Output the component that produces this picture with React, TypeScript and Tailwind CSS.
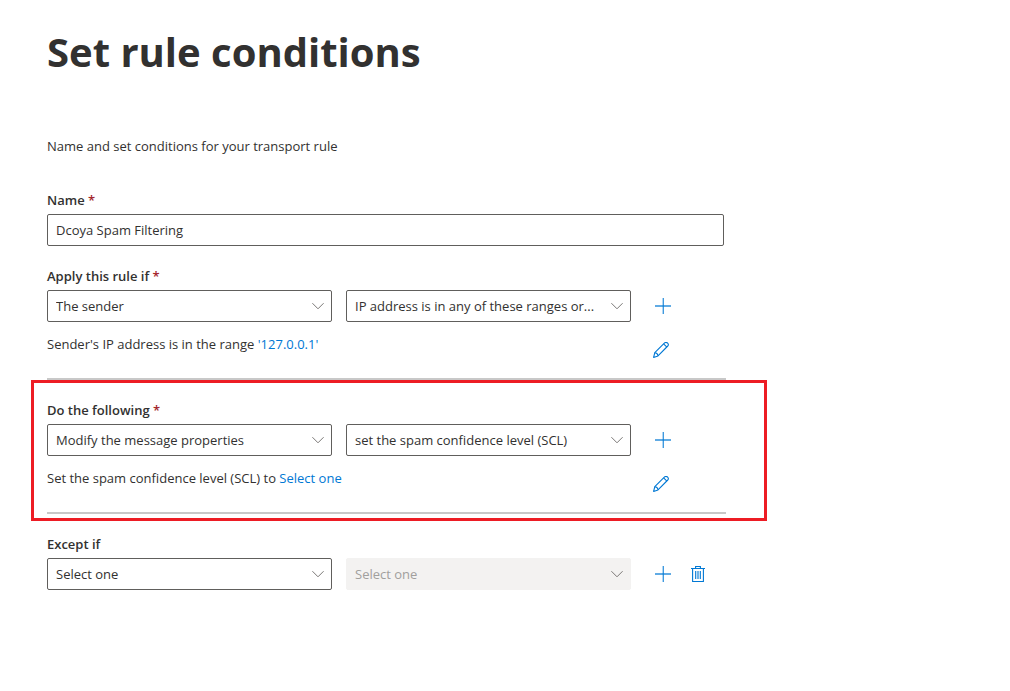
import { useState, type ReactNode } from "react";

function ChevronIcon() {
  return (
    <svg
      className="pointer-events-none absolute right-2 top-1/2 h-3 w-3 -translate-y-1/2"
      viewBox="0 0 12 12"
      fill="none"
      stroke="#7a7876"
      aria-hidden="true"
    >
      <path d="M0.4 3.2L6 8.8l5.6-5.6" />
    </svg>
  );
}

function PlusIcon() {
  return (
    <svg className="h-4 w-4" viewBox="0 0 16 16" fill="#0078d4" aria-hidden="true">
      <path d="M0 7h16v2H0z" fillOpacity="0.62" />
      <path d="M7.6 0h1.4v16H7.6z" fillOpacity="0.75" />
    </svg>
  );
}

function PencilIcon() {
  return (
    <svg
      className="h-4 w-4"
      viewBox="0 0 16 16"
      fill="none"
      stroke="#0078d4"
      strokeWidth="1.1"
      strokeLinejoin="round"
      aria-hidden="true"
    >
      <path d="M0.6 15.4l1.2-4.8L11.6 0.9c.9-.7 2.2-.6 3 .2.8.8.9 2.1.2 2.9L5 13.9z" />
      <path d="M10.6 1.9l3.3 3.2M1.8 10.8c1.9.1 3 1.2 3.1 3" />
    </svg>
  );
}

function TrashIcon() {
  return (
    <svg
      className="h-4 w-4"
      viewBox="0 0 16 16"
      fill="none"
      stroke="#0078d4"
      strokeWidth="1.1"
      aria-hidden="true"
    >
      <path d="M1 2.5h14M5.6 2.5v-2h4.8v2M2.6 2.5v13h10.8v-13" />
      <path d="M5.7 5v8M8 5v8M10.3 5v8" />
    </svg>
  );
}

function IconButton({ label, children }: { label: string; children: ReactNode }) {
  return (
    <button
      type="button"
      aria-label={label}
      className="flex h-8 w-8 cursor-pointer items-center justify-center"
    >
      {children}
    </button>
  );
}

type DropdownProps = {
  id?: string;
  label?: string;
  options: string[];
  disabled?: boolean;
};

function Dropdown({ id, label, options, disabled }: DropdownProps) {
  return (
    <div className="relative min-w-0 flex-1">
      <select
        id={id}
        aria-label={label}
        disabled={disabled}
        className="h-8 w-full appearance-none truncate rounded-xs border border-[#605e5c] bg-white pl-2 pr-7 disabled:border-[#f3f2f1] disabled:bg-[#f3f2f1] disabled:text-[#a19f9d] disabled:opacity-100"
      >
        {options.map((option) => (
          <option key={option}>{option}</option>
        ))}
      </select>
      <ChevronIcon />
    </div>
  );
}

type RuleProps = {
  id: string;
  title: string;
  required?: boolean;
  first: string[];
  second: string[];
  secondDisabled?: boolean;
  removable?: boolean;
  highlighted?: boolean;
  summary?: ReactNode;
};

function RuleSection({
  id,
  title,
  required,
  first,
  second,
  secondDisabled,
  removable,
  highlighted,
  summary,
}: RuleProps) {
  return (
    <section className="relative mt-5">
      <label htmlFor={id} className="block font-semibold">
        {title} {required && <span className="text-[#a4262c]">*</span>}
      </label>
      <div className="mt-1 flex">
        <div className="flex min-w-0 flex-1 gap-3.5">
          <Dropdown id={id} options={first} />
          <Dropdown label={title + " property"} options={second} disabled={secondDisabled} />
        </div>
        <div className="flex w-[95px] gap-[3px] pl-4">
          <IconButton label="Add">
            <PlusIcon />
          </IconButton>
          {removable && (
            <IconButton label="Delete">
              <TrashIcon />
            </IconButton>
          )}
        </div>
      </div>
      {summary && (
        <div className="flex h-14 justify-between pt-3">
          <p>{summary}</p>
          <div className="w-[81px]">
            <IconButton label="Edit">
              <PencilIcon />
            </IconButton>
          </div>
        </div>
      )}
      {summary && <hr className="border-t-2 border-[#c8c8c8]" />}
      {highlighted && (
        <div className="pointer-events-none absolute -bottom-[7px] -left-4 -right-[41px] -top-5 border-3 border-[#ed1c24]" />
      )}
    </section>
  );
}

export default function App() {
  const [name, setName] = useState("Dcoya Spam Filtering");

  return (
    <main className="min-h-screen bg-white px-[47px] py-6 font-['Open_Sans','Noto_Sans',sans-serif] text-[13px] leading-5 text-[#323130]">
      <h1 className="text-[40px] font-bold leading-14">Set rule conditions</h1>
      <p className="mt-14">Name and set conditions for your transport rule</p>

      <form className="mt-[34px] max-w-[679px]">
        <label htmlFor="rule-name" className="block font-semibold">
          Name <span className="text-[#a4262c]">*</span>
        </label>
        <div className="mt-1 pr-0.5">
          <input
            id="rule-name"
            type="text"
            value={name}
            onChange={(e) => setName(e.target.value)}
            className="block h-8 w-full rounded-xs border border-[#605e5c] px-2"
          />
        </div>

        <RuleSection
          id="apply-if"
          title="Apply this rule if"
          required
          first={["The sender"]}
          second={["IP address is in any of these ranges or..."]}
          summary={
            <>
              Sender's IP address is in the range{" "}
              <a href="#range" className="text-[#0078d4]">
                '127.0.0.1'
              </a>
            </>
          }
        />
        <RuleSection
          id="do-following"
          title="Do the following"
          required
          highlighted
          first={["Modify the message properties"]}
          second={["set the spam confidence level (SCL)"]}
          summary={
            <>
              Set the spam confidence level (SCL) to{" "}
              <a href="#scl" className="text-[#0078d4]">
                Select one
              </a>
            </>
          }
        />
        <RuleSection
          id="except-if"
          title="Except if"
          removable
          secondDisabled
          first={["Select one"]}
          second={["Select one"]}
        />
      </form>
    </main>
  );
}
